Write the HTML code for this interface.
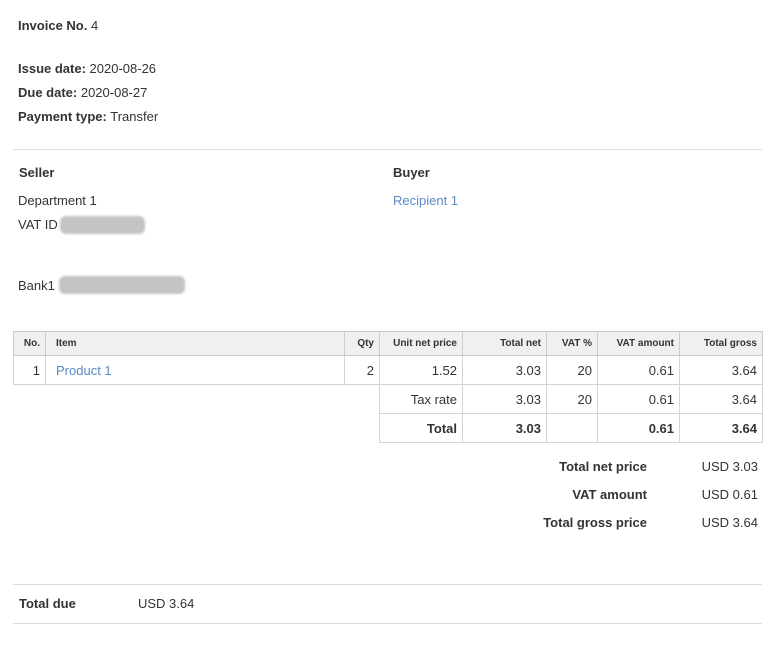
<!DOCTYPE html>
<html><head><meta charset="utf-8"><style>
body{margin:0;width:781px;height:656px;background:#fff;font-family:"Liberation Sans",Arial,sans-serif;font-size:13px;color:#333;position:relative;overflow:hidden}
.a{position:absolute;line-height:16px;white-space:nowrap}
b{font-weight:bold}
.l{color:#5a8ac6}
.hr{position:absolute;left:13px;width:749px;height:1px;background:#ddd}
.blur{position:absolute;background:#c4c4c4;border-radius:6px;filter:blur(1px)}
table{position:absolute;left:13px;top:331px;border-collapse:collapse;font-size:13px}
td,th{border:1px solid #d4d4d4;padding:0 5px;text-align:right;height:29px;box-sizing:border-box}
th{font-size:10px;font-weight:bold;background:#f0f0f0;height:24px;border-color:#ccc}
.n{border:none}
</style></head><body>
<div class="a" style="left:18px;top:18px"><b>Invoice No.</b> 4</div>
<div class="a" style="left:18px;top:61px"><b>Issue date:</b> 2020-08-26</div>
<div class="a" style="left:18px;top:85px"><b>Due date:</b> 2020-08-27</div>
<div class="a" style="left:18px;top:109px"><b>Payment type:</b> Transfer</div>
<div class="hr" style="top:149px"></div>
<div class="a" style="left:19px;top:165px"><b>Seller</b></div>
<div class="a" style="left:393px;top:165px"><b>Buyer</b></div>
<div class="a" style="left:18px;top:193px">Department 1</div>
<div class="a l" style="left:393px;top:193px">Recipient 1</div>
<div class="a" style="left:18px;top:217px">VAT ID</div>
<div class="blur" style="left:60px;top:216px;width:85px;height:18px"></div>
<div class="a" style="left:18px;top:278px">Bank1</div>
<div class="blur" style="left:59px;top:276px;width:126px;height:18px"></div>
<table>
<tr><th style="width:32px">No.</th><th style="width:299px;text-align:left;padding-left:10px">Item</th><th style="width:35px">Qty</th><th style="width:83px">Unit net price</th><th style="width:84px">Total net</th><th style="width:51px">VAT %</th><th style="width:82px">VAT amount</th><th style="width:83px">Total gross</th></tr>
<tr><td>1</td><td class="l" style="text-align:left;padding-left:10px">Product 1</td><td>2</td><td>1.52</td><td>3.03</td><td>20</td><td>0.61</td><td>3.64</td></tr>
<tr><td class="n" colspan="3" style="border-top:1px solid #d4d4d4;border-right:1px solid #d4d4d4"></td><td>Tax rate</td><td>3.03</td><td>20</td><td>0.61</td><td>3.64</td></tr>
<tr><td class="n" colspan="3" style="border-right:1px solid #d4d4d4"></td><td><b>Total</b></td><td><b>3.03</b></td><td></td><td><b>0.61</b></td><td><b>3.64</b></td></tr>
</table>
<div class="a" style="right:134px;top:459px"><b>Total net price</b></div>
<div class="a" style="right:23px;top:459px">USD 3.03</div>
<div class="a" style="right:134px;top:487px"><b>VAT amount</b></div>
<div class="a" style="right:23px;top:487px">USD 0.61</div>
<div class="a" style="right:134px;top:515px"><b>Total gross price</b></div>
<div class="a" style="right:23px;top:515px">USD 3.64</div>
<div class="hr" style="top:584px"></div>
<div class="a" style="left:19px;top:596px"><b>Total due</b></div>
<div class="a" style="left:138px;top:596px">USD 3.64</div>
<div class="hr" style="top:623px"></div>
</body></html>
